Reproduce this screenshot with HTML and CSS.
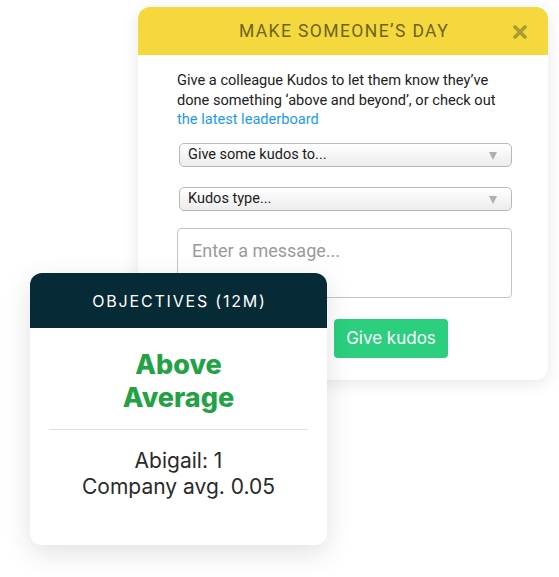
FILE: index.html
```html
<!DOCTYPE html>
<html>
<head>
<meta charset="utf-8">
<link rel="stylesheet" href="styles.css">
</head>
<body>
<div class="stage">
  <div class="kudos">
    <div class="kudos-head">
      <span class="kudos-title">MAKE SOMEONE’S DAY</span>
      <svg class="close" width="14" height="14" viewBox="0 0 14 14"><path d="M2 2 L12 12 M12 2 L2 12" stroke="#a99b30" stroke-width="3.6" stroke-linecap="round"/></svg>
    </div>
    <div class="kudos-body">
      <p class="intro">Give a colleague Kudos to let them know they’ve done something ‘above and beyond’, or check out <a class="link">the latest leaderboard</a></p>
      <div class="select"><span>Give some kudos to...</span><span class="arrow"></span></div>
      <div class="select"><span>Kudos type...</span><span class="arrow"></span></div>
      <div class="message">Enter a message...</div>
      <div class="btn">Give kudos</div>
    </div>
  </div>
  <div class="objectives">
    <div class="obj-head">OBJECTIVES (12M)</div>
    <div class="obj-body">
      <div class="rating">Above<br>Average</div>
      <div class="sep"></div>
      <div class="stats">Abigail: 1<br>Company avg. 0.05</div>
    </div>
  </div>
</div>
</body>
</html>
```
FILE: styles.css
```css
html, body { margin: 0; padding: 0; background: #fff; }
.stage { position: relative; width: 559px; height: 577px; overflow: hidden; }
.kudos {
  margin: 7px 0 0 138px;
  width: 410px;
  height: 373px;
  border-radius: 12px;
  background: #fff;
  box-shadow: 0 3px 16px rgba(40, 60, 80, 0.12);
  font-family: Roboto, "Liberation Sans", sans-serif;
  overflow: hidden;
}
.kudos-head {
  height: 48px;
  background: #f4d83d;
  display: flex;
  align-items: center;
  justify-content: center;
  position: relative;
}
.kudos-title {
  font-size: 17.5px;
  letter-spacing: 1.4px;
  color: #6c6424;
  padding-left: 2px;
}
.close { position: absolute; right: 21px; top: 18px; }
.kudos-body { padding: 16px 36px 0 39px; }
.intro {
  margin: 0;
  font-size: 14.6px;
  line-height: 19.5px;
  color: #222;
}
.link { color: #1c9cf0; }
.select {
  margin: 13px 0 0 2px;
  height: 22px;
  border: 1px solid #b8b8b8;
  border-radius: 5px;
  background: linear-gradient(#ffffff, #ececec);
  display: flex;
  align-items: center;
  justify-content: space-between;
  padding: 0 14px 0 8px;
  box-sizing: content-box;
  width: 309px;
  font-size: 14.5px;
  color: #1c1c1c;
}
.select + .select { margin-top: 20px; }
.arrow {
  width: 0; height: 0;
  border-left: 4.5px solid transparent;
  border-right: 4.5px solid transparent;
  border-top: 8px solid #b0b0b0;
  margin-top: 2px;
}
.message {
  margin-top: 17px;
  width: 335px;
  height: 70px;
  box-sizing: border-box;
  border: 1px solid #c4c4c4;
  border-radius: 4px;
  padding: 11px 0 0 14px;
  font-size: 18px;
  color: #9a9a9a;
}
.btn {
  margin: 21px 0 0 157px;
  width: 114px;
  height: 39px;
  border-radius: 4px;
  background: #2bcf7e;
  color: #fff;
  font-family: Inter, Roboto, sans-serif;
  font-size: 17px;
  display: flex;
  align-items: center;
  justify-content: center;
}
.objectives {
  position: absolute;
  left: 30px;
  top: 273px;
  width: 297px;
  height: 272px;
  border-radius: 12px;
  background: #fff;
  box-shadow: 0 8px 28px rgba(0, 0, 0, 0.12);
  overflow: hidden;
  font-family: Inter, Roboto, sans-serif;
}
.obj-head {
  height: 55px;
  background: #062a36;
  color: #fff;
  font-size: 16px;
  letter-spacing: 1.8px;
  display: flex;
  align-items: center;
  justify-content: center;
  padding-left: 2px;
}
.obj-body { padding: 20px 19px 0 19px; text-align: center; }
.rating {
  font-size: 27px;
  font-weight: 800;
  line-height: 33px;
  color: #22a245;
}
.sep { margin-top: 15px; height: 1px; background: #d9e1e2; }
.stats {
  margin-top: 18px;
  font-size: 21px;
  line-height: 26px;
  color: #2a2a2a;
}
```
